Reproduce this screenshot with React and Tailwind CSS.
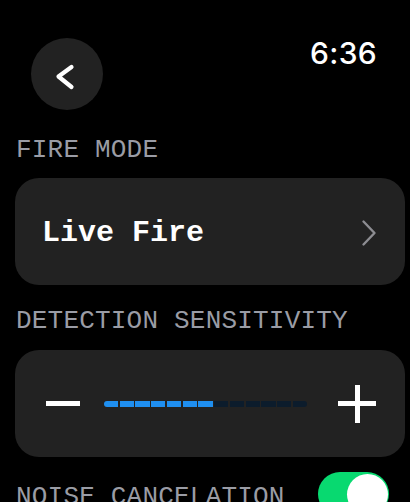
const MONO = { fontFamily: '"Liberation Mono", "DejaVu Sans Mono", monospace' };

const BackButton = () => (
  <div className="w-[72px] h-[72px] rounded-full bg-[#222222] flex items-center justify-center">
    <svg width="72" height="72" viewBox="0 0 72 72" fill="none">
      <path
        d="M40.5 29 L27.5 38.5 L40.5 49"
        stroke="white"
        strokeWidth="4.2"
        strokeLinecap="round"
        strokeLinejoin="round"
      />
    </svg>
  </div>
);

const SectionLabel = ({ children, className = "" }) => (
  <p
    className={`text-[26px] leading-[32px] text-[#9a9ca5] tracking-[0.2px] ${className}`}
    style={MONO}
  >
    {children}
  </p>
);

const SensitivityBar = ({ level = 7, total = 13 }) => (
  <div className="flex w-[203px] h-[6px] gap-[1.5px] rounded-full overflow-hidden">
    {Array.from({ length: total }).map((_, i) => (
      <div
        key={i}
        className={`flex-1 h-full ${i < level ? "bg-[#1f8ff0]" : "bg-[#0c1c2c]"}`}
      />
    ))}
  </div>
);

export default function App() {
  return (
    <div className="w-[410px] h-[502px] bg-black overflow-hidden text-white select-none">
      {/* Header */}
      <div className="flex items-start justify-between pt-[38px] pl-[31px] pr-[33px]">
        <BackButton />
        <span
          className="-mt-[3px] text-[30px] leading-[36px] font-medium tracking-[0.3px]"
          style={{ fontFamily: "Inter, 'Liberation Sans', sans-serif" }}
        >
          6:36
        </span>
      </div>

      <div className="pl-[15px] pr-[5px]">
        <SectionLabel className="mt-[24px] pl-[1px]">FIRE MODE</SectionLabel>

        <div className="mt-[12px] h-[107px] rounded-[24px] bg-[#222222] flex items-center justify-between pl-[27px] pr-[28px]">
          <span className="text-[30px] leading-[36px] font-bold pt-[2px]" style={MONO}>
            Live Fire
          </span>
          <svg width="16" height="28" viewBox="0 0 16 28" fill="none" className="mt-[2px]">
            <path
              d="M2.5 2.5 L13.5 14 L2.5 25.5"
              stroke="#8d8d92"
              strokeWidth="2.4"
              strokeLinecap="round"
              strokeLinejoin="round"
            />
          </svg>
        </div>

        <SectionLabel className="mt-[20px] pl-[1px]">DETECTION SENSITIVITY</SectionLabel>

        <div className="mt-[13px] h-[107px] rounded-[24px] bg-[#222222] flex items-center pl-[31px] pr-[29px]">
          <div className="w-[34px] h-[5px] bg-white" />
          <div className="ml-[24px]">
            <SensitivityBar />
          </div>
          <div className="ml-auto relative w-[38px] h-[38px]">
            <div className="absolute left-0 top-[16.5px] w-[38px] h-[5px] bg-white" />
            <div className="absolute top-0 left-[16.5px] w-[5px] h-[38px] bg-white" />
          </div>
        </div>

        <div className="mt-[15px] flex items-center justify-between pl-[1px] pr-[16px]">
          <SectionLabel className="mt-[6px]">NOISE CANCELATION</SectionLabel>
          <div className="w-[71px] h-[44px] rounded-full bg-[#08d970] flex items-center justify-end pr-[1px]">
            <div className="w-[41px] h-[41px] rounded-full bg-white" />
          </div>
        </div>
      </div>
    </div>
  );
}
